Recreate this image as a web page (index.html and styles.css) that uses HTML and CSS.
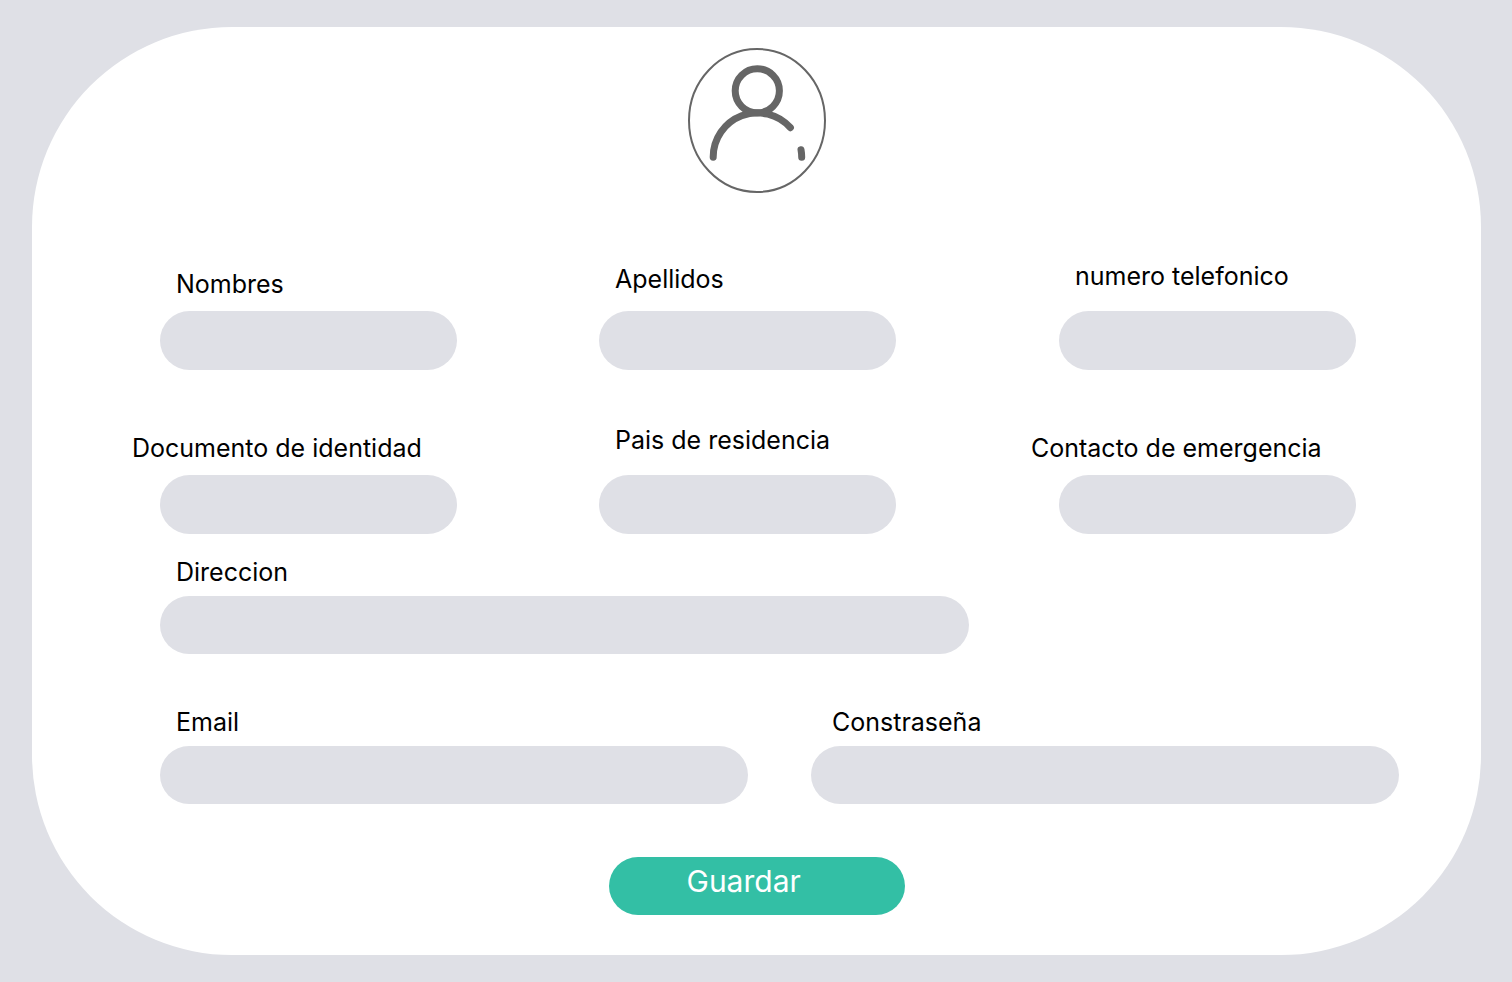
FILE: index.html
```html
<!DOCTYPE html>
<html lang="es">
<head>
  <meta charset="utf-8">
  <meta name="viewport" content="width=device-width, initial-scale=1">
  <title>Perfil</title>
  <link rel="stylesheet" href="styles.css">
</head>
<body>
  <main class="card">
    <svg class="avatar" viewBox="0 0 138 145" role="img" aria-label="Usuario">
      <ellipse class="avatar-ring" cx="69" cy="72.5" rx="68" ry="71.5"/>
      <g class="avatar-person">
        <circle cx="69.3" cy="42.8" r="22.1"/>
        <path d="M25.2 109.2A44.2 44.2 0 0 1 102.4 79.7M113 101.7Q113.7 105.5 113.7 109.2"/>
      </g>
    </svg>
    <form class="form">
      <div class="row row-three">
        <div class="field">
          <label for="nombres">Nombres</label>
          <input id="nombres" type="text">
        </div>
        <div class="field field-roomy">
          <label for="apellidos">Apellidos</label>
          <input id="apellidos" type="text">
        </div>
        <div class="field field-loose">
          <label for="telefono">numero telefonico</label>
          <input id="telefono" type="tel">
        </div>
      </div>
      <div class="row row-three">
        <div class="field field-outdent">
          <label for="documento">Documento de identidad</label>
          <input id="documento" type="text">
        </div>
        <div class="field field-loose">
          <label for="pais">Pais de residencia</label>
          <input id="pais" type="text">
        </div>
        <div class="field field-outdent">
          <label for="contacto">Contacto de emergencia</label>
          <input id="contacto" type="text">
        </div>
      </div>
      <div class="row row-address">
        <div class="field field-wide">
          <label for="direccion">Direccion</label>
          <input id="direccion" type="text">
        </div>
      </div>
      <div class="row row-two">
        <div class="field field-wide">
          <label for="email">Email</label>
          <input id="email" type="email">
        </div>
        <div class="field field-wide field-indent">
          <label for="clave">Constraseña</label>
          <input id="clave" type="password">
        </div>
      </div>
      <button class="save" type="submit">Guardar</button>
    </form>
  </main>
</body>
</html>
```
FILE: styles.css
```css
* {
  box-sizing: border-box;
}

body {
  margin: 0;
  min-height: 100vh;
  padding: 27px 31px 27px 32px;
  display: flex;
  background: #dfe0e6;
  color: #000;
  font-family: Inter, "Liberation Sans", sans-serif;
}

.card {
  flex: 1;
  display: flex;
  flex-direction: column;
  align-items: center;
  padding: 21px 0 40px;
  border-radius: 200px;
  background: #fff;
}

.avatar {
  width: 138px;
  height: 145px;
  margin-bottom: 67px;
  fill: none;
  stroke: #666;
}

.avatar-ring {
  stroke-width: 2;
}

.avatar-person {
  stroke-width: 7;
  stroke-linecap: round;
}

.form {
  width: 100%;
  display: flex;
  flex-direction: column;
}

.row {
  display: grid;
  align-items: end;
  padding: 0 82px 0 128px;
}

.row-three {
  grid-template-columns: 439fr 460fr 297fr;
  margin-bottom: 54px;
  padding-right: 125px;
}

.row-address {
  grid-template-columns: 809fr 430fr;
  margin-top: -32px;
  margin-bottom: 52px;
}

.row-two {
  grid-template-columns: 1fr 1fr;
  column-gap: 63px;
  margin-bottom: 53px;
}

.field {
  display: flex;
  flex-direction: column;
  gap: 11px;
}

.field-roomy {
  gap: 16px;
}

.field-loose {
  gap: 19px;
}

.field-wide {
  gap: 8px;
}

.field label {
  margin-left: 16px;
  font-size: 25px;
  line-height: 32px;
  white-space: nowrap;
}

.field-outdent label {
  margin-left: -28px;
}

.field-indent label {
  margin-left: 21px;
}

.field input {
  width: 100%;
  max-width: 297px;
  height: 59px;
  padding: 0 24px;
  border: 0;
  border-radius: 30px;
  background: #dfe0e6;
  font: inherit;
  font-size: 25px;
}

.field-wide input {
  max-width: none;
  height: 58px;
}

.save {
  align-self: center;
  width: 296px;
  height: 58px;
  padding: 0 0 11px 78px;
  border: 0;
  border-radius: 29px;
  background: #33bfa5;
  color: #fff;
  font: inherit;
  font-size: 30px;
  text-align: left;
  cursor: pointer;
}
```
